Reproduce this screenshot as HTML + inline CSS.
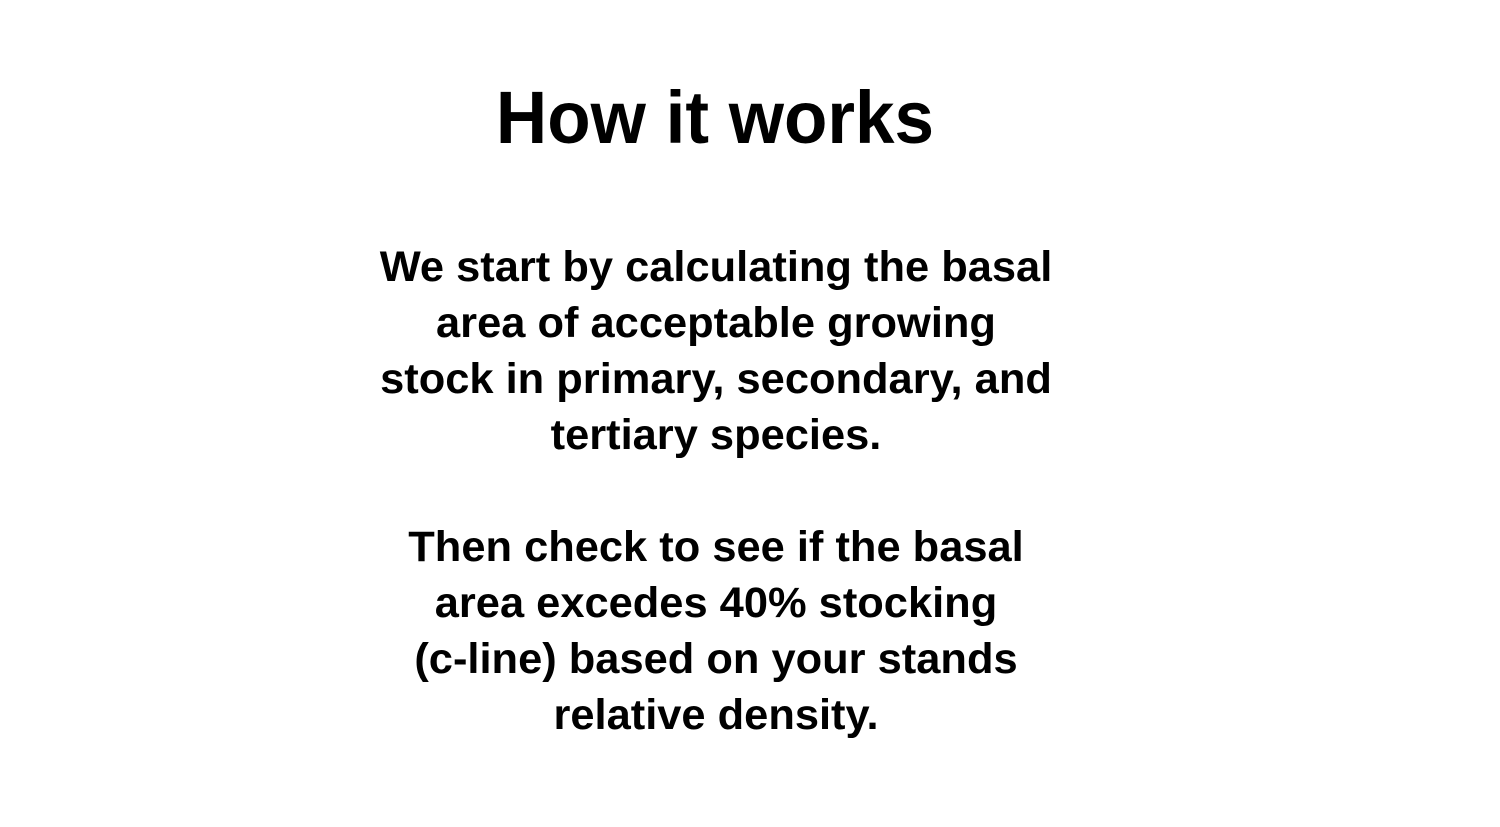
<!DOCTYPE html>
<html><head><meta charset="utf-8"><style>
html,body{margin:0;padding:0;background:#fff;width:1500px;height:827px;overflow:hidden}
.t{position:absolute;left:0;width:1430px;text-align:center;top:78px;font:bold 74px/80px "Liberation Sans",sans-serif;color:#000;transform:scaleX(0.96);transform-origin:715px 0}
.b{position:absolute;left:0;width:1432px;text-align:center;top:239px;font:bold 43px/56px "Liberation Sans",sans-serif;color:#000;transform:scaleX(1.01);transform-origin:716px 0}
</style></head><body>
<div class="t">How it works</div>
<div class="b">We start by calculating the basal<br>area of acceptable growing<br>stock in primary, secondary, and<br>tertiary species.<br><br>Then check to see if the basal<br>area excedes 40% stocking<br>(c-line) based on your stands<br>relative density.</div>
</body></html>
